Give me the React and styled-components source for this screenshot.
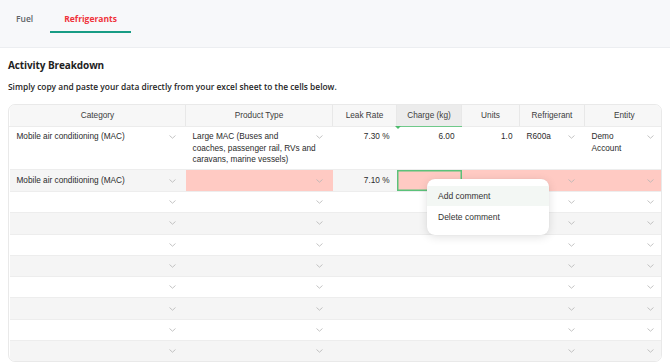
import React from 'react';
import styled, { createGlobalStyle } from 'styled-components';

const GlobalStyle = createGlobalStyle`
  html, body {
    margin: 0;
    padding: 0;
    background: #ffffff;
  }
  body {
    font-family: 'Liberation Sans', Arial, sans-serif;
    color: #2f2f2f;
  }
`;

const columns = [
  { key: 'category', label: 'Category', width: 176, select: true },
  { key: 'product', label: 'Product Type', width: 147, select: true },
  { key: 'leak', label: 'Leak Rate', width: 64, align: 'right' },
  { key: 'charge', label: 'Charge (kg)', width: 65, align: 'right' },
  { key: 'units', label: 'Units', width: 58, align: 'right' },
  { key: 'refrigerant', label: 'Refrigerant', width: 65, select: true },
  { key: 'entity', label: 'Entity', width: 79, select: true },
];

const rows = [
  {
    size: 'tall',
    cells: {
      category: 'Mobile air conditioning (MAC)',
      product: 'Large MAC (Buses and\ncoaches, passenger rail, RVs and\ncaravans, marine vessels)',
      leak: '7.30 %',
      charge: '6.00',
      units: '1.0',
      refrigerant: 'R600a',
      entity: 'Demo\nAccount',
    },
  },
  {
    size: 'mid',
    cells: { category: 'Mobile air conditioning (MAC)', leak: '7.10 %' },
    errors: ['product', 'charge', 'units', 'refrigerant', 'entity'],
    selected: 'charge',
  },
  ...Array.from({ length: 8 }, () => ({ cells: {} })),
];

const rowHeights = { tall: '42px', mid: '21px' };

const Page = styled.div`
  width: 670px;
  min-height: 364px;
  background: #ffffff;
`;

const TopBar = styled.div`
  height: 47px;
  background: #f7f8fa;
  border-bottom: 1px solid #eceef1;
  display: flex;
  align-items: flex-start;
  padding-left: 2px;
  gap: 3px;
`;

const Tab = styled.div`
  font-family: 'Open Sans', sans-serif;
  font-size: 8.5px;
  font-weight: ${(p) => (p.$active ? 700 : 600)};
  line-height: 12px;
  padding: 13px 14px 6px;
  color: ${(p) => (p.$active ? '#f0323b' : '#5f6368')};
  border-bottom: 2px solid ${(p) => (p.$active ? '#189c85' : 'transparent')};
`;

const Panel = styled.div`
  padding: 0 8px;
`;

const Heading = styled.h2`
  margin: 0;
  padding-top: 10px;
  font-family: 'Open Sans', sans-serif;
  font-size: 10px;
  font-weight: 700;
  letter-spacing: -0.1px;
  line-height: 14px;
  color: #1e1e1e;
`;

const Description = styled.p`
  margin: 9px 0 0;
  font-family: 'Open Sans', sans-serif;
  font-size: 8.4px;
  font-weight: 600;
  line-height: 12px;
  color: #262626;
`;

const TableArea = styled.div`
  position: relative;
  margin-top: 11px;
`;

const TableFrame = styled.div`
  border: 1px solid #e9e9e9;
  border-radius: 7px;
  overflow: hidden;
`;

const Table = styled.table`
  width: 100%;
  border-collapse: collapse;
  table-layout: fixed;
  font-family: 'Liberation Sans', Arial, sans-serif;
  font-size: 8.25px;
  color: #2b2b2b;
`;

const HeadCell = styled.th`
  position: relative;
  height: 21px;
  padding: 0 6px;
  font-weight: 400;
  color: #3c3c3c;
  text-align: center;
  background: ${(p) => (p.$active ? '#ececec' : '#f7f7f7')};
  border-left: 1px solid ${(p) => (p.$first ? 'transparent' : '#e8e8e8')};
  border-bottom: 1px solid ${(p) => (p.$active ? '#6fc98a' : '#ececec')};

  ${(p) =>
    p.$active &&
    `
    &::after {
      content: '';
      position: absolute;
      left: -2px;
      bottom: -3px;
      width: 0;
      height: 0;
      border-left: 3px solid transparent;
      border-right: 3px solid transparent;
      border-top: 3px solid #4cbb6c;
    }
  `}
`;

const BodyRow = styled.tr`
  background: ${(p) => (p.$striped ? '#f5f5f5' : '#ffffff')};
  border-top: 1px solid #ededed;
`;

const Cell = styled.td`
  height: ${(p) => rowHeights[p.$size] || '20.3px'};
  padding: 0 7px;
  vertical-align: ${(p) => (p.$size === 'tall' ? 'top' : 'middle')};
  text-align: ${(p) => p.$align || 'left'};
  line-height: 11.5px;
  white-space: pre;
  background: ${(p) => (p.$error ? '#ffcac3' : 'transparent')};
  box-shadow: ${(p) => (p.$selected ? 'inset 0 0 0 1.5px #5cc27a' : 'none')};
`;

const CellText = styled.div`
  padding-top: ${(p) => (p.$tall ? '4px' : '0')};
`;

const SelectBox = styled.div`
  display: flex;
  align-items: ${(p) => (p.$tall ? 'flex-start' : 'center')};
  justify-content: space-between;
  gap: 3px;
  padding-top: ${(p) => (p.$tall ? '4px' : '0')};
  padding-right: 2.5px;
`;

const SelectValue = styled.span`
  flex: 1;
  min-width: 0;
`;

const Chevron = styled.svg`
  flex: none;
  width: 7px;
  height: 4px;
  margin-top: ${(p) => (p.$tall ? '4px' : '0')};
`;

const Menu = styled.div`
  position: absolute;
  left: 419px;
  top: 75px;
  width: 122px;
  padding: 7px 0 8px;
  background: #ffffff;
  border-radius: 8px;
  box-shadow: 0 2px 10px rgba(0, 0, 0, 0.12), 0 0 1px rgba(0, 0, 0, 0.08);
`;

const MenuItem = styled.div`
  height: 20px;
  display: flex;
  align-items: center;
  padding: 0 11px;
  font-family: 'Liberation Sans', Arial, sans-serif;
  font-size: 8.5px;
  color: #333333;
  background: ${(p) => (p.$hover ? '#f3f7f4' : 'transparent')};
  & + & {
    margin-top: 1px;
  }
`;

function ChevronIcon({ tall }) {
  return (
    <Chevron $tall={tall} viewBox="0 0 7 4">
      <path d="M0.8 0.8 L3.5 3.2 L6.2 0.8" fill="none" stroke="#b5b5b5" strokeWidth="0.8" strokeLinecap="round" strokeLinejoin="round" />
    </Chevron>
  );
}

export default function App() {
  return (
    <Page>
      <GlobalStyle />
      <TopBar>
        <Tab>Fuel</Tab>
        <Tab $active>Refrigerants</Tab>
      </TopBar>
      <Panel>
        <Heading>Activity Breakdown</Heading>
        <Description>
          Simply copy and paste your data directly from your excel sheet to the cells below.
        </Description>
        <TableArea>
          <TableFrame>
            <Table>
              <colgroup>
                {columns.map((c) => (
                  <col key={c.key} style={{ width: c.width }} />
                ))}
              </colgroup>
              <thead>
                <tr>
                  {columns.map((c, i) => (
                    <HeadCell key={c.key} $first={i === 0} $active={c.key === 'charge'}>
                      {c.label}
                    </HeadCell>
                  ))}
                </tr>
              </thead>
              <tbody>
                {rows.map((row, ri) => {
                  const tall = row.size === 'tall';
                  return (
                    <BodyRow key={ri} $striped={ri % 2 === 1}>
                      {columns.map((c) => {
                        const value = row.cells[c.key] || '';
                        const error = row.errors && row.errors.includes(c.key);
                        return (
                          <Cell
                            key={c.key}
                            $size={row.size}
                            $align={c.align}
                            $error={error}
                            $selected={row.selected === c.key}
                          >
                            {c.select ? (
                              <SelectBox $tall={tall}>
                                <SelectValue>{value}</SelectValue>
                                <ChevronIcon tall={tall} />
                              </SelectBox>
                            ) : (
                              <CellText $tall={tall}>{value}</CellText>
                            )}
                          </Cell>
                        );
                      })}
                    </BodyRow>
                  );
                })}
              </tbody>
            </Table>
          </TableFrame>
          <Menu>
            <MenuItem $hover>Add comment</MenuItem>
            <MenuItem>Delete comment</MenuItem>
          </Menu>
        </TableArea>
      </Panel>
    </Page>
  );
}
